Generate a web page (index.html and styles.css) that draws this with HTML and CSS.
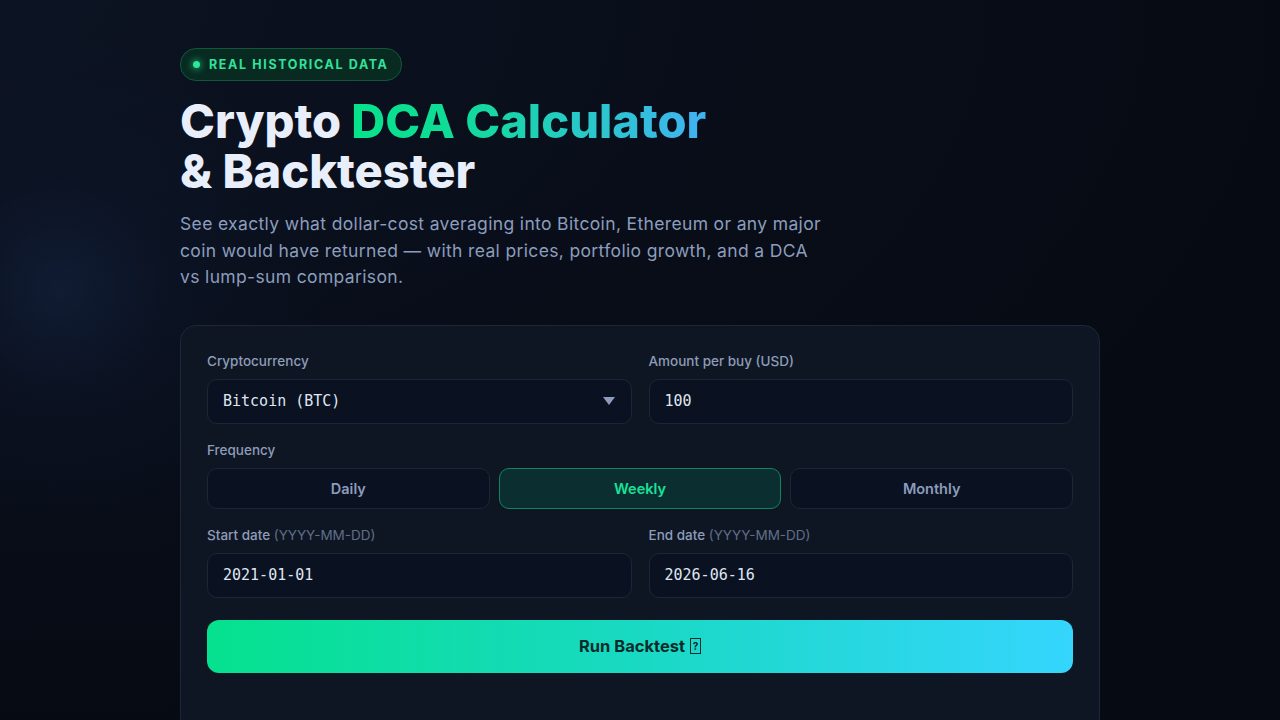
FILE: index.html
```html
<!DOCTYPE html>
<html lang="en">
<head>
<meta charset="utf-8">
<title>Crypto DCA Calculator &amp; Backtester</title>
<link rel="stylesheet" href="styles.css">
</head>
<body>
<div class="page">

<header class="hero">
  <span class="badge"><span class="badge-dot"></span>REAL HISTORICAL DATA</span>
  <h1>Crypto <span class="grad">DCA Calculator</span><br>&amp; Backtester</h1>
  <p class="lead">See exactly what dollar-cost averaging into Bitcoin, Ethereum or any major
  coin would have returned &mdash; with real prices, portfolio growth, and a DCA
  vs lump-sum comparison.</p>
</header>

<form class="card" onsubmit="return false">
  <div class="row">
    <div class="field">
      <label>Cryptocurrency</label>
      <div class="control select">
        <span>Bitcoin (BTC)</span>
        <span class="caret"></span>
      </div>
    </div>
    <div class="field">
      <label>Amount per buy (USD)</label>
      <div class="control">100</div>
    </div>
  </div>

  <div class="field">
    <label>Frequency</label>
    <div class="freq">
      <button type="button" class="seg">Daily</button>
      <button type="button" class="seg active">Weekly</button>
      <button type="button" class="seg">Monthly</button>
    </div>
  </div>

  <div class="row">
    <div class="field">
      <label>Start date <span class="hint">(YYYY-MM-DD)</span></label>
      <div class="control">2021-01-01</div>
    </div>
    <div class="field">
      <label>End date <span class="hint">(YYYY-MM-DD)</span></label>
      <div class="control">2026-06-16</div>
    </div>
  </div>

  <button type="submit" class="run">Run Backtest <span class="tofu">?</span></button>
</form>

</div>
</body>
</html>
```

FILE: styles.css
```css
/* DCA calculator page */

html, body
{ margin: 0;
  height: 100%;
}

body
{ background-color: #060a12;
  background-image:
    radial-gradient(circle at 60px 290px, rgba(22, 38, 70, 0.55) 0, rgba(14, 24, 46, 0.35) 110px, rgba(6, 10, 18, 0) 260px),
    radial-gradient(ellipse at 0 0, #0c1322 0, #080d18 45%, #060a12 80%);
  font-family: Inter, "Noto Sans", sans-serif;
  color: #e8edf9;
  overflow: hidden;
}

.page
{ width: 920px;
  margin: 0 auto;
  padding-top: 48px;
}

/* hero */

.hero
{ display: flex;
  flex-direction: column;
  align-items: flex-start;
}

.badge
{ display: inline-flex;
  align-items: center;
  gap: 9px;
  height: 31px;
  padding: 0 12px 0 12px;
  border: 1px solid #11573d;
  border-radius: 16px;
  background: #082a21;
  color: #2fe39b;
  font-size: 12.5px;
  font-weight: 700;
  letter-spacing: 0.13em;
}

.badge-dot
{ width: 7px;
  height: 7px;
  border-radius: 50%;
  background: #2ae89a;
  box-shadow: 0 0 6px 2px rgba(42, 232, 154, 0.45);
}

h1
{ margin: 15px 0 0;
  font-size: 47px;
  line-height: 50px;
  font-weight: 800;
  letter-spacing: 0;
  color: #e9eefb;
}

.grad
{ background: linear-gradient(90deg, #06e28b 0%, #10dc98 30%, #28c9c8 65%, #41b2f3 100%);
  -webkit-background-clip: text;
  background-clip: text;
  color: transparent;
}

.lead
{ margin: 15px 0 0;
  max-width: 645px;
  font-size: 17.5px;
  line-height: 26.5px;
  letter-spacing: 0.02em;
  color: #8c9dbd;
}

/* form card */

.card
{ margin-top: 34px;
  padding: 27px 26px 60px;
  border: 1px solid #1d2738;
  border-radius: 16px;
  background: #0f1623;
  display: flex;
  flex-direction: column;
  gap: 18px;
}

.row
{ display: grid;
  grid-template-columns: 1fr 1fr;
  gap: 17px;
}

.field
{ display: flex;
  flex-direction: column;
  gap: 10px;
}

label
{ font-size: 13.5px;
  font-weight: 500;
  color: #8d9cb8;
}

.hint
{ color: #5f6e88;
  font-weight: 400;
}

.control
{ box-sizing: border-box;
  height: 45px;
  display: flex;
  align-items: center;
  justify-content: space-between;
  padding: 0 15px;
  border: 1px solid #1c2638;
  border-radius: 10px;
  background: #0a1120;
  font-family: "DejaVu Sans Mono", "Liberation Mono", monospace;
  font-size: 15px;
  color: #dfe6f2;
}

.caret
{ width: 0;
  height: 0;
  margin-right: 1px;
  border-left: 6px solid transparent;
  border-right: 6px solid transparent;
  border-top: 8px solid #8d9cbc;
}

.freq
{ display: grid;
  grid-template-columns: 1fr 1fr 1fr;
  gap: 9px;
}

.seg
{ height: 41px;
  border: 1px solid #1c2638;
  border-radius: 10px;
  background: #0a1120;
  color: #8d9cbc;
  font-family: Inter, "Noto Sans", sans-serif;
  font-size: 14.5px;
  font-weight: 600;
}

.seg.active
{ border-color: #11855b;
  background: #0b2f31;
  color: #18e298;
}

.run
{ margin-top: 4px;
  height: 53px;
  border: 0;
  border-radius: 12px;
  background: linear-gradient(90deg, #05e18e 0%, #19d9c3 50%, #35d5fd 100%);
  color: #0a2b2a;
  font-family: Inter, "Noto Sans", sans-serif;
  font-size: 16.5px;
  font-weight: 700;
  display: flex;
  align-items: center;
  justify-content: center;
  gap: 5px;
}

.tofu
{ display: inline-flex;
  align-items: center;
  justify-content: center;
  width: 9px;
  height: 14px;
  border: 1.5px solid #0a2b2a;
  font-size: 10px;
  line-height: 1;
}
```
